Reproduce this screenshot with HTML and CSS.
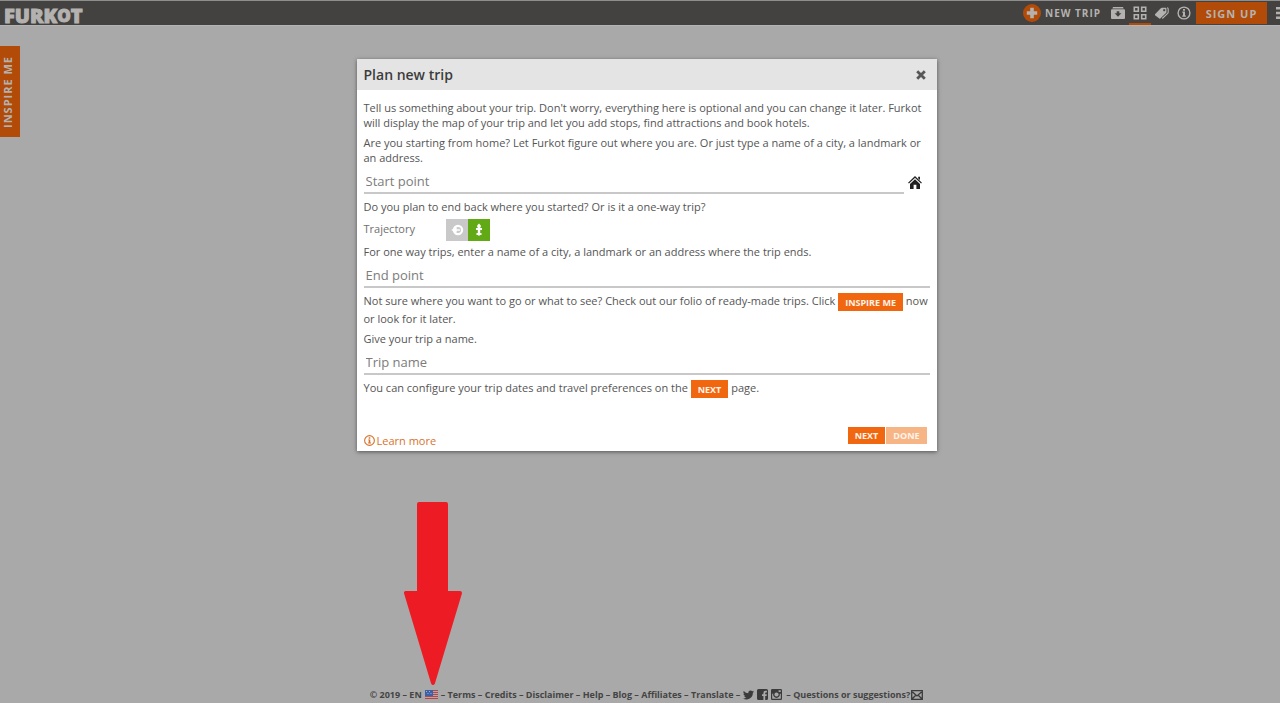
FILE: index.html
```html
<!DOCTYPE html>
<html lang="en">
<head>
<meta charset="utf-8">
<title>Furkot – Plan new trip</title>
<link rel="stylesheet" href="styles.css">
</head>
<body>
<div class="page">
  <header class="topbar">
    <a class="logo" href="#"><span>F</span><span class="low">U</span><span>R</span><span class="low">K</span><span class="small">O</span><span>T</span></a>
    <nav class="nav">
      <button class="new-trip" type="button">
        <svg width="18" height="18" viewBox="0 0 18 18"><circle cx="9" cy="9" r="9" fill="#b24b07"/><path d="M7.2 3.8h3.6v3.4h3.4v3.6h-3.4v3.4H7.2v-3.4H3.8V7.2h3.4z" fill="#b4b2b0"/></svg>
        <span>NEW TRIP</span>
      </button>
      <button class="icon" type="button" aria-label="My trips"><svg width="14" height="12" viewBox="0 0 14 12"><path fill-rule="evenodd" fill="#b4b2b0" d="M2 0h10l.6 1.6H1.4zM.5 2.200h13l.5 1V11q0 1-1 1H1q-1 0-1-1V3.200zM5.700 4.200v2H3.600L7 9.800l3.400-3.600H8.300v-2z"/></svg></button>
      <button class="icon active" type="button" aria-label="Folio"><svg width="14" height="14" viewBox="0 0 14 14" fill="none" stroke="#b4b2b0" stroke-width="1.600"><path d="M1.300 1.300h4v4h-4zM8.700 1.300h4v4h-4zM1.300 8.700h4v4h-4zM8.700 8.700h4v4h-4z"/></svg></button>
      <button class="icon" type="button" aria-label="Deals"><svg width="14" height="12" viewBox="0 0 14 12"><path fill-rule="evenodd" fill="#b4b2b0" d="M0 7.300 5.800 1.200Q6.300.7 7 .7l3.700.1q.7 0 .7.700l.1 3.500q0 .6-.5 1.100L5.300 11.600q-.5.500-1 0L0 8.200q-.4-.4 0-.9zM9.200 2a1.100 1.100 0 1 0 .01 0z"/><path fill="none" stroke="#b4b2b0" stroke-width="1.100" d="M12 .8q1.200.2 1.200 1.200v3.200q0 .6-.5 1.100L7.300 11.500"/></svg></button>
      <button class="icon" type="button" aria-label="Help"><svg width="14" height="14" viewBox="0 0 14 14"><circle cx="7" cy="7" r="5.900" fill="none" stroke="#b4b2b0" stroke-width="1.400"/><path fill="#b4b2b0" d="M6 3h2v1.700H6zM5.300 5.600H8v3.900h.9v1.200H5.200V9.500H6V6.800h-.7z"/></svg></button>
      <button class="signup" type="button">SIGN UP</button>
      <button class="menu" type="button" aria-label="Menu"><svg width="14" height="12" viewBox="0 0 14 12"><path fill="#b4b2b0" d="M0 0h14v2.400H0zM0 4.800h14v2.400H0zM0 9.600h14V12H0z"/></svg></button>
    </nav>
  </header>

  <button class="side-tab" type="button">INSPIRE ME</button>

  <main class="main">
    <form class="dialog" role="dialog" aria-labelledby="dialog-title">
      <div class="dialog-head">
        <h1 id="dialog-title">Plan new trip</h1>
        <button class="close" type="button" aria-label="Close"><svg width="10" height="10" viewBox="0 0 10 10"><path d="M1.200 1.200l7.600 7.600M8.800 1.200 1.200 8.800" stroke="#575757" stroke-width="2.800"/></svg></button>
      </div>
      <div class="dialog-body">
        <p>Tell us something about your trip. Don't worry, everything here is optional and you can change it later. Furkot will display the map of your trip and let you add stops, find attractions and book hotels.</p>
        <p>Are you starting from home? Let Furkot figure out where you are. Or just type a name of a city, a landmark or an address.</p>
        <div class="field-row">
          <input class="field" type="text" placeholder="Start point" aria-label="Start point">
          <button class="home" type="button" aria-label="Use home"><svg width="14" height="13" viewBox="0 0 14 13"><path fill="#222" d="M7 3.200 12 7.900V13H8.400V8.800H5.600V13H2V7.900z"/><path fill="none" stroke="#222" stroke-width="1.300" d="M.5 7.100 7 1l6.500 6.100"/><path fill="#222" d="M10.200.7H12v3.400l-1.800-1.700z"/></svg></button>
        </div>
        <p>Do you plan to end back where you started? Or is it a one-way trip?</p>
        <div class="trajectory" role="radiogroup" aria-labelledby="trajectory-label">
          <span class="trajectory-label" id="trajectory-label">Trajectory</span>
          <label class="choice"><input type="radio" name="trajectory" aria-label="Round trip"><svg width="22" height="22" viewBox="0 0 22 22"><circle cx="12" cy="11" r="4.100" fill="none" stroke="#fff" stroke-width="2.200"/><path fill="#fff" d="M5.800 10.200h2.700V8.600l2.200 0v4.800l-2.200 0v-1.600H5.800zM10 10.200h4v1.600h-4z"/></svg></label>
          <label class="choice"><input type="radio" name="trajectory" aria-label="One way" checked><svg width="22" height="22" viewBox="0 0 22 22"><path fill="#fff" d="M11 4.500l1.800 2v1.700h-.6v.8H14v2h-1.800v3h1.300v2H12l-1 1-1-1H8.500v-2h1.300v-3H8V9h1.800v-.8h-.6V6.500z"/></svg></label>
        </div>
        <p>For one way trips, enter a name of a city, a landmark or an address where the trip ends.</p>
        <input class="field" type="text" placeholder="End point" aria-label="End point">
        <p>Not sure where you want to go or what to see? Check out our folio of ready-made trips. Click <button class="btn inline" type="button">INSPIRE ME</button> now or look for it later.</p>
        <p>Give your trip a name.</p>
        <input class="field" type="text" placeholder="Trip name" aria-label="Trip name">
        <p>You can configure your trip dates and travel preferences on the <button class="btn inline" type="button">NEXT</button> page.</p>
      </div>
      <div class="dialog-foot">
        <a class="learn" href="#"><svg width="11" height="11" viewBox="0 0 14 14"><circle cx="7" cy="7" r="6.200" fill="none" stroke="#d9722b" stroke-width="1.400"/><path fill="#d9722b" d="M6 3h2v1.700H6zM5.300 5.600H8v3.900h.9v1.200H5.200V9.500H6V6.800h-.7z"/></svg>Learn more</a>
        <div class="actions">
          <button class="btn" type="button">NEXT</button>
          <button class="btn" type="submit" disabled>DONE</button>
        </div>
      </div>
    </form>
  </main>

  <svg class="arrow" width="58" height="184" viewBox="0 0 58 184"><path fill="#ed1c24" stroke="#ed1c24" stroke-width="4" stroke-linejoin="round" d="M15 2h27v89h14L29 181 2 91h13z"/></svg>

  <footer class="footer">
    <span>© 2019 – EN</span>
    <svg class="flag" width="13" height="9" viewBox="0 0 13 9"><path fill="#b9a5a8" d="M0 0h13v9H0z"/><path stroke="#b0474c" d="M0 .5h13M0 2.500h13M0 4.500h13M0 6.500h13M0 8.500h13"/><path fill="#3d5fa8" d="M0 0h8v6H0z"/><path fill="#9fb0d0" d="M1 1h1v1H1zM4 1h1v1H4zM2.500 3h1v1h-1zM5.500 3h1v1h-1z"/></svg>
    <span>– <a href="#">Terms</a> – <a href="#">Credits</a> – <a href="#">Disclaimer</a> – <a href="#">Help</a> – <a href="#">Blog</a> – <a href="#">Affiliates</a> – <a href="#">Translate</a> –</span>
    <a class="social" href="#" aria-label="Twitter"><svg width="11" height="10" viewBox="0 0 24 20"><path fill="#3b3b3b" d="M24 2.400a10 10 0 0 1-2.800.8A5 5 0 0 0 23.300.5a10 10 0 0 1-3.100 1.200 4.900 4.900 0 0 0-8.400 4.500A14 14 0 0 1 1.700 1a4.900 4.900 0 0 0 1.500 6.600 5 5 0 0 1-2.200-.6 4.900 4.900 0 0 0 3.900 4.900 5 5 0 0 1-2.200.1 4.900 4.900 0 0 0 4.600 3.400A9.900 9.900 0 0 1 0 17.500 14 14 0 0 0 21.500 5 10 10 0 0 0 24 2.400z"/></svg></a>
    <a class="social" href="#" aria-label="Facebook"><svg width="11" height="11" viewBox="0 0 11 11"><path fill="#3b3b3b" fill-rule="evenodd" d="M1.500 0h8Q11 0 11 1.500v8Q11 11 9.500 11H8.200V7h1.400l.2-1.700H8.200V4.200q0-.8.800-.8h.9V1.800H8.400Q6.400 1.800 6.400 4v1.300H5V7h1.400v4H1.500Q0 11 0 9.500v-8Q0 0 1.500 0z"/></svg></a>
    <a class="social" href="#" aria-label="Instagram"><svg width="11" height="11" viewBox="0 0 11 11"><path fill="#3b3b3b" fill-rule="evenodd" d="M1.300 0h8.400Q11 0 11 1.300v8.400Q11 11 9.700 11H1.300Q0 11 0 9.700V1.300Q0 0 1.300 0zM1.200 4.700v4.500q0 .6.600.6h7.400q.6 0 .6-.6V4.700h-1a3.400 3.400 0 1 1-6.600 0zM7.600 1.200v1.900h2.100V1.200zM5.500 3.400a2.100 2.100 0 1 0 .01 0z"/></svg></a>
    <span>– <a href="#">Questions or suggestions?</a></span>
    <a class="mail" href="#" aria-label="Email"><svg width="12" height="10" viewBox="0 0 12 10"><path fill="none" stroke="#3b3b3b" stroke-width="1.300" d="M.7.700h10.600v8.600H.7zM1.500 2 6 6l4.500-4M1.500 8.500l3-3M10.500 8.500l-3-3"/></svg></a>
  </footer>
</div>
</body>
</html>
```

FILE: styles.css
```css
* {
  box-sizing: border-box;
}

html {
  height: 100%;
  overflow: hidden;
}

body {
  height: 100%;
  margin: 0;
  overflow: hidden;
  background: #a9a9a9;
  color: #555;
  font: 11px/15px "Open Sans", "Noto Sans", sans-serif;
}

button,
input {
  font-family: inherit;
}

button {
  border: 0;
  padding: 0;
  background: none;
  cursor: pointer;
}

svg {
  display: block;
  flex: none;
}

a {
  color: inherit;
  text-decoration: none;
}

.page {
  position: relative;
  display: flex;
  flex-direction: column;
  width: calc(100% + 13px);
  min-height: 100%;
}

.topbar {
  display: flex;
  justify-content: space-between;
  height: 26px;
  border-top: 1px solid #8e8e8e;
  border-bottom: 1px solid #b4b4b4;
  background: #434240;
}

.logo {
  display: flex;
  align-items: center;
  padding: 5px 0 0 4px;
  color: #b4b2b0;
  font-size: 20px;
  font-weight: 800;
  line-height: 20px;
  -webkit-text-stroke: 1px #b4b2b0;
}

.logo .low {
  padding-top: 1px;
}

.logo .small {
  font-size: 17px;
}

.nav {
  display: flex;
  align-items: stretch;
}

.new-trip {
  display: flex;
  align-items: center;
  gap: 4px;
  margin-right: 6px;
  color: #b4b2b0;
  font-size: 10px;
  font-weight: 700;
  letter-spacing: 1px;
}

.icon {
  display: flex;
  align-items: center;
  justify-content: center;
  width: 22px;
  border-top: 2px solid transparent;
  border-bottom: 2px solid transparent;
}

.icon.active {
  border-bottom-color: #b24b07;
}

.signup {
  width: 71px;
  margin: 1px 9px 1px 1px;
  background: #b24b07;
  color: #b4b2b0;
  font-size: 11px;
  font-weight: 700;
  letter-spacing: 1px;
}

.menu {
  padding-right: 3px;
}

.side-tab {
  position: absolute;
  top: 46px;
  left: 0;
  width: 20px;
  height: 91px;
  padding-left: 5px;
  background: #b24b07;
  color: #b4b2b0;
  font-size: 11px;
  font-weight: 700;
  letter-spacing: 1px;
  line-height: 15px;
  writing-mode: vertical-rl;
  transform: rotate(180deg);
}

.main {
  flex: 1;
  padding: 33px 16px;
}

.dialog {
  max-width: 580px;
  margin: 0 auto;
  background: #fff;
  box-shadow: 0 1px 4px rgba(0, 0, 0, 0.5);
}

.dialog-head {
  display: flex;
  align-items: center;
  justify-content: space-between;
  height: 31px;
  padding: 0 11px 0 7px;
  background: #e4e4e4;
}

.dialog-head h1 {
  margin: 0;
  color: #3c3c3c;
  font-size: 14px;
  font-weight: 600;
}

.dialog-body {
  display: flex;
  flex-direction: column;
  gap: 5px;
  padding: 10px 7px 0;
}

.dialog-body p {
  margin: 0;
}

.field-row {
  display: flex;
  align-items: center;
}

.field {
  width: 100%;
  height: 24px;
  padding: 0 2px;
  border: 0;
  border-bottom: 2px solid #c8c8c8;
  background: none;
  color: #444;
  font-size: 13px;
}

.field::placeholder {
  color: #7c7c7c;
  opacity: 1;
}

.home {
  padding: 1px 8px 0 4px;
}

.trajectory {
  display: flex;
  height: 22px;
  margin-bottom: -2px;
}

.trajectory-label {
  width: 82px;
  padding-top: 2px;
  color: #707070;
}

.choice {
  position: relative;
  background: #c9c9c9;
}

.choice input {
  position: absolute;
  margin: 0;
  opacity: 0;
}

.choice:has(input:checked) {
  background: #62aa15;
}

.btn {
  height: 17px;
  padding: 0 7px;
  background: #f0670f;
  color: #fff3ea;
  font-size: 9px;
  font-weight: 700;
  line-height: 17px;
}

.btn:disabled {
  background: #f7b485;
}

.btn.inline {
  height: 18px;
  vertical-align: middle;
}

.dialog-foot {
  display: flex;
  align-items: flex-end;
  justify-content: space-between;
  padding: 29px 10px 7px 7px;
}

.learn {
  display: flex;
  align-items: center;
  gap: 2px;
  margin-bottom: -4px;
  color: #d9722b;
}

.actions {
  display: flex;
  gap: 1px;
}

.arrow {
  position: absolute;
  top: 502px;
  left: 404px;
}

.footer {
  display: flex;
  align-items: center;
  justify-content: center;
  height: 17px;
  color: #444;
  font-size: 9px;
  font-weight: 700;
}

.flag {
  margin: 0 3px;
}

.social {
  margin-left: 3px;
}

.social + span {
  margin-left: 4px;
}

.mail {
  margin-left: 1px;
}
```
